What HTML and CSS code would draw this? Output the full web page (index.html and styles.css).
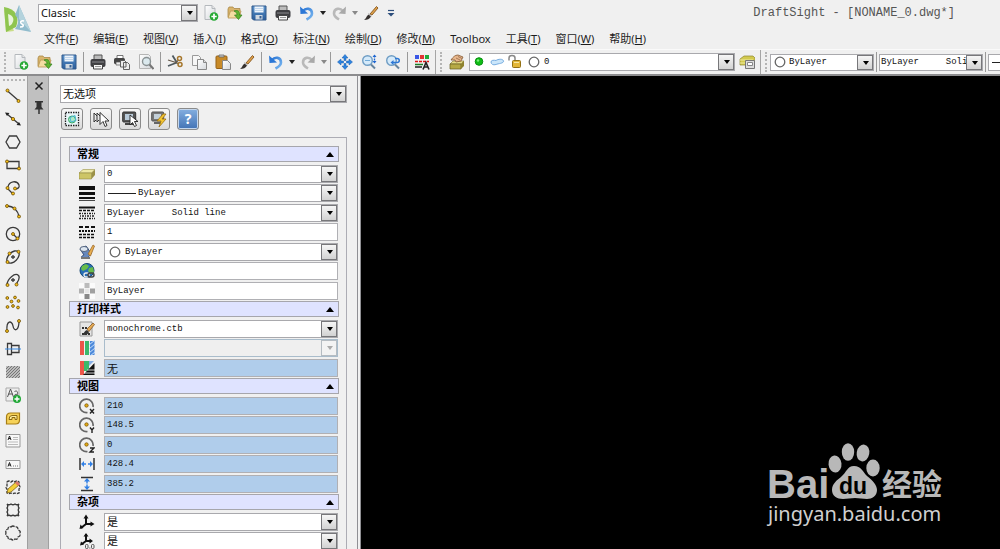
FILE: index.html
```
<!DOCTYPE html>
<html lang="zh-CN">
<head>
<meta charset="utf-8">
<title>DraftSight - [NONAME_0.dwg*]</title>
<link rel="stylesheet" href="styles.css">
</head>
<body>
<svg class="sprite" aria-hidden="true">
  <defs>
    <linearGradient id="gPage" x1="0" y1="0" x2="1" y2="1"><stop offset="0" stop-color="#fff"/><stop offset="1" stop-color="#d5d8dc"/></linearGradient>
    <linearGradient id="gBlue" x1="0" y1="0" x2="0" y2="1"><stop offset="0" stop-color="#5a93cc"/><stop offset="1" stop-color="#2a5c9a"/></linearGradient>
    <linearGradient id="gUndo" x1="0" y1="0" x2="1" y2="1"><stop offset="0" stop-color="#2b77d6"/><stop offset="1" stop-color="#7cb8f0"/></linearGradient>
  </defs>
  <symbol id="new" viewBox="0 0 16 16"><path d="M2 .5h7l3 3v11H2z" fill="url(#gPage)" stroke="#b4b8bc"/><path d="M9 .5v3h3" fill="#e6e6e6" stroke="#b4b8bc"/><circle cx="11" cy="11.500" r="4.300" fill="#24a832"/><path d="M11 8.800v5.400M8.300 11.500h5.400" stroke="#fff" stroke-width="1.700"/></symbol>
  <symbol id="open" viewBox="0 0 16 16"><path d="M1 12V4l1-2h4l1 1.500h6V12z" fill="#d9b56c" stroke="#a98848" stroke-width=".8"/><path d="M1 13l2.500-7H14l-2 7z" fill="#f4dda2" stroke="#b79552" stroke-width=".8"/><path d="M7 6c4-1.500 6 .5 5.500 4H15l-3.500 4.500L7.500 10H10C10 8 9 7 7 6z" fill="#5fb32f" stroke="#30801d" stroke-width=".7"/></symbol>
  <symbol id="save" viewBox="0 0 16 16"><path d="M1 1h14v14H2.500L1 13.500z" fill="url(#gBlue)" stroke="#31598a"/><path d="M3.500 1.500h9v6h-9z" fill="#eef4fb"/><path d="M3.500 3.500h9M3.500 5.500h9" stroke="#aac7e4" stroke-width=".7"/><path d="M4.500 10h7v4.500h-7z" fill="#d1d9e1"/><path d="M8.500 11h2v2.500h-2z" fill="#365f92"/></symbol>
  <symbol id="print" viewBox="0 0 16 16"><path d="M4 1h8v5H4z" fill="#bbb" stroke="#555"/><rect x=".5" y="5" width="15" height="8" rx="2" fill="#3f3f42"/><path d="M2 8h12" stroke="#8b8b8e"/><path d="M3.500 10.500h9v4.500h-9z" fill="#f6f6f6" stroke="#444"/><path d="M5 12.500h6" stroke="#999"/></symbol>
  <symbol id="batch" viewBox="0 0 16 16"><path d="M3 1.500h6v3H3z" fill="#fff" stroke="#555" stroke-width=".8"/><rect x="0" y="4" width="11" height="6" rx="1.500" fill="#444"/><path d="M2 8h6v3H2z" fill="#eee" stroke="#555" stroke-width=".7"/><path d="M6.500 6.500h4l1.500 1.500v5H6.500zM9.500 8.500h4l2 2v5h-6z" fill="#eee" stroke="#555" stroke-width=".9"/></symbol>
  <symbol id="preview" viewBox="0 0 16 16"><path d="M1.500 .5h9l2 2v12h-11z" fill="url(#gPage)" stroke="#b5b5b5"/><circle cx="8.500" cy="7.500" r="4" fill="#dbe9ee" stroke="#8a9294" stroke-width="1.400"/><path d="M11.500 10.500l4 4.500" stroke="#777" stroke-width="2"/></symbol>
  <symbol id="cut" viewBox="0 0 16 16"><path d="M10 8.500L1 12M9.500 8L5.500 1.500" stroke="#4f5a60" stroke-width="1.800"/><path d="M9 8.500l2-2M9 8.500l3 1.500M1 6l8 2.500" stroke="#65594a" stroke-width="1.300"/><circle cx="12.500" cy="4.500" r="2" fill="none" stroke="#a6772d" stroke-width="1.500"/><circle cx="13" cy="10.500" r="2" fill="none" stroke="#a6772d" stroke-width="1.500"/></symbol>
  <symbol id="copy" viewBox="0 0 16 16"><path d="M1.500 1.500h6l2 2v8h-8z" fill="#f6f6f6" stroke="#999"/><path d="M6.500 5.500h6l3 3v7h-9z" fill="url(#gPage)" stroke="#888"/><path d="M12.500 5.500v3h3" fill="#ddd" stroke="#888"/></symbol>
  <symbol id="paste" viewBox="0 0 16 16"><rect x="1" y="2" width="11" height="12.500" rx="1" fill="#c88a27" stroke="#966219"/><path d="M4 3V1h5v2z" fill="#ccc" stroke="#666" stroke-width=".8"/><path d="M7.500 6.500h5l3 3v6h-8z" fill="url(#gPage)" stroke="#888"/></symbol>
  <symbol id="brush" viewBox="0 0 16 16"><path d="M7 9L13.500 1.500 15 3 9 10z" fill="#dfa24b" stroke="#85531c" stroke-width=".9"/><path d="M1 15c2-1 2-3.500 4.500-5.500l2.500 2c-1 2.500-4 3.500-7 3.500z" fill="#34302e"/><path d="M5.500 8.500L8.500 11" stroke="#aaa"/></symbol>
  <symbol id="undo" viewBox="0 0 16 16"><path d="M4 6C7 2.500 13 3 13 8.500c0 3-2.500 4.500-5.500 6" fill="none" stroke="url(#gUndo)" stroke-width="2.600"/><path d="M1 1.500l.500 7.500L9 8.500z" fill="#2b77d6"/></symbol>
  <symbol id="redo" viewBox="0 0 16 16"><path d="M12 6C9 2.500 3 3 3 8.500c0 3 2.500 4.500 5 6" fill="none" stroke="#b9b9b9" stroke-width="2.600"/><path d="M15 1.500l-.500 7.500L7.500 8.500z" fill="#a9a9a9"/></symbol>
  <symbol id="pan" viewBox="0 0 16 16"><path d="M8 .5l3 3.500H9v2.500H7V4H5zM8 15.500L5 12h2V9.500h2V12h2zM.5 8L4 5v2h2.500v2H4v2zM15.500 8L12 11V9H9.500V7H12V5z" fill="#2b83e0" stroke="#1b5cae" stroke-width=".5"/></symbol>
  <symbol id="zoomin" viewBox="0 0 16 16"><circle cx="6.500" cy="6.500" r="4.800" fill="#d5eafa" stroke="#6f9dc4" stroke-width="1.400"/><path d="M4 6.500h5" stroke="#72abd9"/><path d="M10 10.500l4 4" stroke="#66849e" stroke-width="2"/><path d="M13.500 1.500v7" stroke="#1d66d2" stroke-width="1.300" stroke-dasharray="2 1"/><path d="M11.500 3l2-2.500 2 2.500zM11.500 7l2 2.500 2-2.500z" fill="#1d66d2"/></symbol>
  <symbol id="zoomback" viewBox="0 0 16 16"><circle cx="6.500" cy="6.500" r="4.800" fill="#d5eafa" stroke="#6f9dc4" stroke-width="1.400"/><path d="M10 10.500l4 4" stroke="#66849e" stroke-width="2"/><path d="M7 8.500h5c3 0 3-4 0-4h-2" fill="none" stroke="#2d78d5" stroke-width="1.500"/><path d="M8.500 6v5L5.500 8.500z" fill="#2d78d5"/></symbol>
  <symbol id="props" viewBox="0 0 16 16"><path d="M1 1h4v4H1z" fill="#3957e6"/><path d="M6 1h4v4H6z" fill="#e03434"/><path d="M11 1h4v4h-4z" fill="#1faa3b"/><path d="M1 7.500h14" stroke="#d11" stroke-width="1.500" stroke-dasharray="3 1"/><path d="M1 10.500h8" stroke="#1a7f26" stroke-width="1.500"/><path d="M1 13h7" stroke="#222" stroke-width="1.500"/><path d="M9 15.500l3-7 3 7M10.200 13h3.600" fill="none" stroke="#222" stroke-width="1.600"/></symbol>
  <symbol id="layers" viewBox="0 0 16 16"><path d="M1 10l3-3h11l-3 3z" fill="#e6dc88" stroke="#776d25" stroke-width=".6"/><path d="M1 10h11v5H1z" fill="#b6a945" stroke="#655b1d" stroke-width=".7"/><path d="M12 10l3-3v5l-3 3z" fill="#8f832e"/><path d="M2 6c2-3 4-5 7-5l5 2-2 4-5 1-1-2z" fill="#e7b68c" stroke="#845832" stroke-width=".8"/><path d="M7 4l4 2M9 2.500l4 2" stroke="#8d6040" stroke-width=".7"/></symbol>
  <symbol id="slab" viewBox="0 0 16 16"><path d="M0 7l4-3.500h12L12.500 7z" fill="#eee9a7" stroke="#9b9248" stroke-width=".6"/><path d="M0 7h12.500v6H0z" fill="#cdc566" stroke="#8e863f" stroke-width=".6"/><path d="M12.500 7L16 3.500V9l-3.500 4z" fill="#9b9147"/></symbol>
  <symbol id="layerstate" viewBox="0 0 16 16"><path d="M1 5l4-3h9l2 2v7H1z" fill="#d2c94e" stroke="#8e852f" stroke-width=".7"/><path d="M1 6h13M1 9h8" stroke="#f0eca0"/><path d="M6.500 6.500h9v8h-9z" fill="#dcdcdc" stroke="#777"/><path d="M8.500 8.500h5v3h-5z" fill="#fff" stroke="#888"/></symbol>
  <symbol id="dot" viewBox="0 0 16 16"><circle cx="7" cy="7.500" r="3.800" fill="#10bd16" stroke="#079010"/><circle cx="6" cy="6.500" r="1.200" fill="#7bed7b"/></symbol>
  <symbol id="freeze" viewBox="0 0 16 16"><path d="M1 8c0-2 3-2 5-1.500C8 5 13 4.500 13.500 7S8 9.500 6 10.500C3 11.500 1 10 1 8z" fill="#cbe6fa" stroke="#76ace0"/></symbol>
  <symbol id="unlock" viewBox="0 0 16 16"><path d="M1 6.500V4C1 .7 7 .7 7 4v3" fill="none" stroke="#888" stroke-width="1.500"/><rect x="4.500" y="6.500" width="8" height="7" rx="1" fill="#e3b637" stroke="#927014"/><path d="M6 8.500h5" stroke="#f7e7a5"/></symbol>
  <symbol id="ring" viewBox="0 0 16 16"><circle cx="8" cy="8" r="4.800" fill="#fff" stroke="#666" stroke-width="1.300"/></symbol>

  <symbol id="line" viewBox="0 0 16 16"><path d="M2 2.500l12 10.500" class="ink"/><circle cx="2.500" cy="2.500" r="1.500" class="node"/><circle cx="13.500" cy="13" r="1.500" class="node"/></symbol>
  <symbol id="xline" viewBox="0 0 16 16"><path d="M2 3l12 10" class="ink"/><path d="M0 1.500l4.500.5-2.500 3zM16 14.500l-4.500-.5 2.500-3z" fill="#222"/><circle cx="8" cy="8" r="1.600" class="node"/></symbol>
  <symbol id="hex" viewBox="0 0 16 16"><path d="M4.500 2h7l3.500 6-3.500 6h-7L1 8z" class="ink"/></symbol>
  <symbol id="rect" viewBox="0 0 16 16"><path d="M2 4.500h12v7H2z" class="ink"/><circle cx="2" cy="4.500" r="1.500" class="node"/><circle cx="14" cy="11.500" r="1.500" class="node"/></symbol>
  <symbol id="arc" viewBox="0 0 16 16"><path d="M8 14L2.500 8.500M3 7c1-6 9-7 11-2 1 3-2 4-4 4" class="ink"/><circle cx="8" cy="13.500" r="1.500" class="node"/><circle cx="2.500" cy="8" r="1.500" class="node"/><circle cx="10" cy="8.500" r="1.500" class="node"/></symbol>
  <symbol id="arc3" viewBox="0 0 16 16"><path d="M2 3c6 0 11 4 12 11" class="ink"/><circle cx="2" cy="3" r="1.500" class="node"/><circle cx="9.500" cy="5.500" r="1.500" class="node"/><circle cx="14" cy="13.500" r="1.500" class="node"/></symbol>
  <symbol id="circle" viewBox="0 0 16 16"><circle cx="8" cy="8" r="6.700" class="ink"/><path d="M8 8l5 5" class="ink"/><circle cx="8" cy="8" r="1.500" class="node"/><circle cx="12.500" cy="12.500" r="1.500" class="node"/></symbol>
  <symbol id="ellipse" viewBox="0 0 16 16"><ellipse cx="8" cy="8" rx="7.500" ry="4.500" transform="rotate(-45 8 8)" class="ink"/><path d="M8 6v4M6 8h4" class="ink"/><circle cx="2.500" cy="13" r="1.500" class="node"/><circle cx="13.500" cy="2.800" r="1.500" class="node"/><circle cx="4.500" cy="4.500" r="1.500" class="node"/></symbol>
  <symbol id="earc" viewBox="0 0 16 16"><path d="M2 13C2 7 10 0 13.500 3.500c2 2.500 0 5-2 8M8 6v4M6 8h4" class="ink"/><circle cx="2.500" cy="13" r="1.500" class="node"/><circle cx="11.500" cy="12.500" r="1.500" class="node"/></symbol>
  <symbol id="points" viewBox="0 0 16 16"><g class="node"><circle cx="2.300" cy="3" r="1.400"/><circle cx="10" cy="2.500" r="1.400"/><circle cx="6.500" cy="6.500" r="1.400"/><circle cx="13.500" cy="6" r="1.400"/><circle cx="2.500" cy="12" r="1.400"/><circle cx="8" cy="11" r="1.400"/><circle cx="13" cy="12.500" r="1.400"/></g></symbol>
  <symbol id="spline" viewBox="0 0 16 16"><path d="M2 13C1 2 7 2 8 8s6 5 6-5" class="ink"/><circle cx="2" cy="13" r="1.500" class="node"/><circle cx="14" cy="3" r="1.500" class="node"/></symbol>
  <symbol id="block" viewBox="0 0 16 16"><path d="M2.500 2.500h4v11h-4zM6.500 4.500H14v7H6.500z" class="ink"/><path d="M0 8h16" stroke="#3789e4"/></symbol>
  <symbol id="hatch" viewBox="0 0 16 16"><path d="M1 2h14v12H1z" fill="#bcbcbc"/><path d="M1 5l3-3M1 8l6-6M1 11l9-9M1 14L13 2M4 14L15 3M7 14l8-8M10 14l5-5M13 14l2-2" stroke="#777"/></symbol>
  <symbol id="textadd" viewBox="0 0 16 16"><path d="M1 1h13v13H1z" fill="#eee" stroke="#aaa"/><path d="M2.500 10l3-8 3 8M3.600 7h4M9.500 4.500c4-2 3 3 3 3-4-1-4 3 0 1" fill="none" stroke="#555"/><circle cx="12" cy="12" r="4" fill="#20a836"/><path d="M12 9.500v5M9.500 12h5" stroke="#fff" stroke-width="1.400"/></symbol>
  <symbol id="region" viewBox="0 0 16 16"><path d="M1.500 14V7q0-4 4-4h9v7q0 4-4 4z" fill="#f6d258" stroke="#a77e16" stroke-width="1.200"/><path d="M4 9.500q0-4 3-4h5v4h-2v-2H7v2z" fill="#fff0a2" stroke="#8a6914"/></symbol>
  <symbol id="note" viewBox="0 0 16 16"><path d="M1 1.500h14v12.500H1z" fill="#f8f8f8" stroke="#999"/><path d="M3 7l1.500-4L6 7M3.500 5.500h2" fill="none" stroke="#222"/><path d="M8 4.500h5M8 6.500h5M3 9h10M3 11.500h10" stroke="#bbb"/></symbol>
  <symbol id="snote" viewBox="0 0 16 16"><path d="M1 4.500h14v8H1z" fill="#f8f8f8" stroke="#999"/><path d="M3 10.500l1.500-4L6 10.500M3.500 9h2" fill="none" stroke="#222"/><path d="M8 10h5" stroke="#777" stroke-dasharray="1 1"/></symbol>
  <symbol id="revise" viewBox="0 0 16 16"><path d="M2 3q2-2 4 0 2-2 4 0 2-2 4 0v3q2 2 0 4v4q-2 1-4 0-2 1-4 0-2 1-4 0V10q-2-2 0-3z" class="ink" stroke-dasharray="3 1"/><path d="M2 14l1-4 8-7 3 3-8 7z" fill="#f3cf38" stroke="#80651a" stroke-width=".8"/><path d="M10 4l3 3 2-2-3-3z" fill="#d9786b"/></symbol>
  <symbol id="cloud" viewBox="0 0 16 16"><path d="M2 2q2 1.500 4 0 2 1.500 4 0 2 1.500 4 0-1.500 2 0 4-1.500 2 0 4-1.500 2 0 4-2-1.500-4 0-2-1.500-4 0-2-1.500-4 0 1.500-2 0-4 1.500-2 0-4 1.500-2 0-4z" class="ink"/></symbol>
  <symbol id="ecloud" viewBox="0 0 16 16"><path d="M6 2q2-2 4 0 3-1 3 3 3 1 2 3 1 3-2 4 0 3-3 2-2 2-4 0-3 1-3-2-3-2-2-4-1-3 2-4 0-3 3-2z" class="ink" stroke-dasharray="4 1"/></symbol>

  <symbol id="pin" viewBox="0 0 16 16"><path d="M4 2h8v1.500h-1.500V8l2 2.500h-9l2-2.500V3.500H4z" fill="#333"/><path d="M8 10v5" stroke="#333" stroke-width="1.500"/></symbol>
  <symbol id="selall" viewBox="0 0 16 16"><path d="M1.500 1.500h13v13h-13z" fill="#e9f5f8" stroke="#222" stroke-width="1.300" stroke-dasharray="1.500 1"/><circle cx="8" cy="8.500" r="3.500" fill="#afe9c5" stroke="#35a761"/><path d="M6 6.500l5-2 1 5-5 1.500z" fill="none" stroke="#4ab6d5"/></symbol>
  <symbol id="selmulti" viewBox="0 0 16 16"><path d="M1 2v9l2-2M4 2v9l2-2M1 2l3 3M4 2l3 3" fill="none" stroke="#333"/><path d="M7 1.500v12l3-3 2 5 2-1-2-4.500h4z" fill="#fff" stroke="#333"/></symbol>
  <symbol id="selscreen" viewBox="0 0 16 16"><rect x=".7" y="1" width="13" height="10" rx="1" fill="#555" stroke="#333"/><path d="M3 3h8v6H3z" fill="#b9cbda"/><path d="M3 13h8" stroke="#444" stroke-width="2"/><path d="M8 4v10l2.500-2.500 2 4 2-1-2-4H16z" fill="#fff" stroke="#222" stroke-width=".9"/></symbol>
  <symbol id="quick" viewBox="0 0 16 16"><rect x=".7" y="1" width="12" height="9" rx="1" fill="#777" stroke="#555"/><path d="M3 3h7v5H3z" fill="#c3d0da"/><path d="M3 12h7" stroke="#666" stroke-width="2"/><path d="M12 3L6 10h4l-2 6 7-8h-4l4-5z" fill="#f4c632" stroke="#9b7010" stroke-width=".8"/></symbol>

  <symbol id="weights" viewBox="0 0 16 16"><path d="M0 1h16v4H0zM0 7h16v3H0zM0 12h16v2H0zM0 15.300h16v.7H0z" fill="#111"/></symbol>
  <symbol id="ltype" viewBox="0 0 16 16"><path d="M0 2.500h16" stroke="#111" stroke-width="2"/><path d="M0 5.500h16" stroke="#111" stroke-width="1.500" stroke-dasharray="3 1"/><path d="M0 8.500h16M0 13.500h16" stroke="#222" stroke-width="1.500" stroke-dasharray="2 1 1 1"/><path d="M1 11h15" stroke="#222" stroke-width="1.500" stroke-dasharray="1 1 2 1"/></symbol>
  <symbol id="lscale" viewBox="0 0 16 16"><path d="M0 3h16" stroke="#111" stroke-width="2" stroke-dasharray="4 2"/><path d="M0 7h16" stroke="#111" stroke-width="2" stroke-dasharray="2 1"/><path d="M0 10.500h16M0 13.500h16" stroke="#111" stroke-width="1.700" stroke-dasharray="3 1"/></symbol>
  <symbol id="color" viewBox="0 0 16 16"><path d="M1 5l6-3 5 7c-1 4-5 6-8 5s-1-2 1-3z" fill="#6688bd" stroke="#344e7c"/><ellipse cx="5" cy="5" rx="4" ry="2.500" fill="#dce5ef" stroke="#566680"/><path d="M2 14h9" stroke="#777" stroke-width="2"/><path d="M9 10l5-9 1.500 1-4 10z" fill="#e7ae51" stroke="#935e20" stroke-width=".7"/></symbol>
  <symbol id="globe" viewBox="0 0 16 16"><circle cx="8" cy="7.500" r="7" fill="#276eb6" stroke="#154875"/><path d="M3 3l4-2 3 2-2 3-4 2-2-2zM10 5l4-1 1 5-3 2-3-3z" fill="#67bd49"/><rect x="5" y="10" width="5" height="4" rx="2" fill="none" stroke="#eee" stroke-width="1.300"/><rect x="9" y="10" width="6" height="4" rx="2" fill="none" stroke="#444" stroke-width="1.400"/></symbol>
  <symbol id="checker" viewBox="0 0 16 16"><path d="M0 0h16v16H0z" fill="#fbfbfb"/><path d="M5.500 0h5v5h-5z" fill="#bbb"/><path d="M0 5.500h5v5H0z" fill="#b0b0b0"/><path d="M11 5.500h5v5h-5z" fill="#a0a0a0"/><path d="M5.500 11h5v5h-5z" fill="#888"/><path d="M5.500 5.500h5v5h-5z" fill="#e6e6e6"/></symbol>
  <symbol id="pstyle" viewBox="0 0 16 16"><path d="M1 1h12v14H1z" fill="#e5e5e5" stroke="#999"/><path d="M3 7h5M3 13h8" stroke="#333" stroke-width="2" stroke-dasharray="2 1"/><path d="M8 8l6-6 1.500 1.500-5.500 7z" fill="#e4aa54" stroke="#7d4d18" stroke-width=".7"/><path d="M3 14c2-1 2-4 5-5l2 2c-1 3-4 3-7 3z" fill="#333"/></symbol>
  <symbol id="pcolors" viewBox="0 0 16 16"><path d="M1 1h4v14H1z" fill="#ed5549"/><path d="M6 1h4v14H6z" fill="#3cb96b"/><path d="M11 1h4.500v14H11z" fill="#4b88da"/><path d="M10 5l6-5M10 9l6-5M10 13l6-5M11 16l5-4" stroke="#c8e0fa"/></symbol>
  <symbol id="ptable" viewBox="0 0 16 16"><path d="M1 1h4v14H1z" fill="#ed5549"/><path d="M5 1h5v10H5z" fill="#3cb96b"/><path d="M10 1h5L10 6z" fill="#86afe7"/><path d="M15.500 3L4 15h11.500z" fill="#111"/><path d="M8 10h8M5 13h11" stroke="#fff" stroke-width=".8"/></symbol>
  <symbol id="center" viewBox="0 0 16 16"><path d="M8.500 14.500A6.700 6.700 0 1 1 14 9" fill="none" stroke="#666" stroke-width="1.700"/><circle cx="7.500" cy="7.500" r="1.700" fill="#e3ab16" stroke="#7f5b0a" stroke-width=".8"/></symbol>
  <symbol id="cx" viewBox="0 0 16 16"><use href="#center"/><path d="M11 11l4 4.500M15 11l-4 4.500" stroke="#222" stroke-width="1.400"/></symbol>
  <symbol id="cy" viewBox="0 0 16 16"><use href="#center"/><path d="M11 10.500l2 2.500 2-2.500M13 13v3" fill="none" stroke="#222" stroke-width="1.400"/></symbol>
  <symbol id="cz" viewBox="0 0 16 16"><use href="#center"/><path d="M11 11h4l-4 4h4" fill="none" stroke="#222" stroke-width="1.400"/></symbol>
  <symbol id="width" viewBox="0 0 16 16"><path d="M1 2v12M15 2v12" stroke="#333" stroke-width="1.500"/><path d="M2 8l3-3v2.300h2v1.400H5V11zM14 8l-3-3v2.300H9v1.400h2V11z" fill="#2f7fe5"/></symbol>
  <symbol id="height" viewBox="0 0 16 16"><path d="M2 1.500h12M2 14.500h12" stroke="#333" stroke-width="1.500"/><path d="M8 2l3 3.500H8.700v2H7.300v-2H5zM8 14l-3-3.500h2.300v-2h1.400v2H11z" fill="#2f7fe5"/></symbol>
  <symbol id="ucs" viewBox="0 0 16 16"><path d="M7 2v8h7M7 10l-5 4" fill="none" stroke="#111" stroke-width="2"/><path d="M4.500 4.500L7 .5l2.500 4zM11.500 7.500l4 2.500-4 2.500zM.5 15l1-4.500 3 3.500z" fill="#111"/></symbol>
  <symbol id="ucs0" viewBox="0 0 16 16"><path d="M7 1v7h5M7 8l-4 3" fill="none" stroke="#111" stroke-width="2"/><path d="M4.500 3.500L7 0l2.500 3.500zM10.500 5.500L14 8l-3.500 2.500zM1 12.500l1-4 3 3z" fill="#111"/><rect x="6.500" y="11.500" width="2.500" height="4" rx="1" fill="none" stroke="#555"/><rect x="12.500" y="11.500" width="2.500" height="4" rx="1" fill="none" stroke="#555"/><path d="M10.300 15h1" stroke="#555"/></symbol>
  <symbol id="more" viewBox="0 0 16 16"><path d="M5 5.500h6" stroke="#2d4e7c" stroke-width="1.200"/><path d="M4.500 8h7L8 11.500z" fill="#2d4e7c"/></symbol>
</svg>

<header class="header">
  <svg class="logo" viewBox="0 0 28 30" role="img" aria-label="DraftSight"><path d="M0 3L10 26 2 27z" fill="#c9dd86"/><path d="M0 2c12 2 16 10 12 20l-10 5z" fill="#8fc54f"/><path d="M4 9c6 2 7 6 3 11l-2 1z" fill="#e9f4dc"/><path d="M15 0l12 27-16-3c6-8 2-12 0-14z" fill="#91bccd"/><path d="M15 0l12 27L15 14z" fill="#b4d3dd"/><path d="M20 16c-4-1-4 2-2 3s2 3-2 3" fill="none" stroke="#fff" stroke-width="1.600"/></svg>
  <div class="titlebar">
    <span class="combo workspace"><select aria-label="工作空间"><option>Classic</option></select></span>
    <div class="quick">
      <button class="tool" aria-label="新建"><svg><use href="#new"/></svg></button>
      <button class="tool" aria-label="打开"><svg><use href="#open"/></svg></button>
      <button class="tool" aria-label="保存"><svg><use href="#save"/></svg></button>
      <button class="tool" aria-label="打印"><svg><use href="#print"/></svg></button>
      <button class="tool" aria-label="撤消"><svg><use href="#undo"/></svg></button>
      <button class="drop" aria-label="撤消列表"></button>
      <button class="tool" aria-label="重做"><svg><use href="#redo"/></svg></button>
      <button class="drop dim" aria-label="重做列表"></button>
      <button class="tool" aria-label="特性涂刷器"><svg><use href="#brush"/></svg></button>
      <button aria-label="更多"><svg><use href="#more"/></svg></button>
    </div>
    <h1 class="title">DraftSight - [NONAME_0.dwg*]</h1>
  </div>
  <nav class="menu">
    <a href="#">文件(<u>F</u>)</a><a href="#">编辑(<u>E</u>)</a><a href="#">视图(<u>V</u>)</a><a href="#">插入(<u>I</u>)</a><a href="#">格式(<u>O</u>)</a><a href="#">标注(<u>N</u>)</a><a href="#">绘制(<u>D</u>)</a><a href="#">修改(<u>M</u>)</a><a href="#">Toolbox</a><a href="#">工具(<u>T</u>)</a><a href="#">窗口(<u>W</u>)</a><a href="#">帮助(<u>H</u>)</a>
  </nav>
</header>

<div class="toolbars">
  <div class="bar">
    <button class="tool" aria-label="新建"><svg><use href="#new"/></svg></button>
    <button class="tool" aria-label="打开"><svg><use href="#open"/></svg></button>
    <button class="tool" aria-label="保存"><svg><use href="#save"/></svg></button>
    <i class="sep"></i>
    <button class="tool" aria-label="打印"><svg><use href="#print"/></svg></button>
    <button class="tool" aria-label="批量打印"><svg><use href="#batch"/></svg></button>
    <button class="tool" aria-label="打印预览"><svg><use href="#preview"/></svg></button>
    <i class="sep"></i>
    <button class="tool" aria-label="剪切"><svg><use href="#cut"/></svg></button>
    <button class="tool" aria-label="复制"><svg><use href="#copy"/></svg></button>
    <button class="tool" aria-label="粘贴"><svg><use href="#paste"/></svg></button>
    <button class="tool" aria-label="特性涂刷器"><svg><use href="#brush"/></svg></button>
    <i class="sep"></i>
    <button class="tool" aria-label="撤消"><svg><use href="#undo"/></svg></button>
    <button class="drop" aria-label="撤消列表"></button>
    <button class="tool" aria-label="重做"><svg><use href="#redo"/></svg></button>
    <button class="drop dim" aria-label="重做列表"></button>
    <i class="sep"></i>
    <button class="tool" aria-label="平移"><svg><use href="#pan"/></svg></button>
    <button class="tool" aria-label="动态缩放"><svg><use href="#zoomin"/></svg></button>
    <button class="tool" aria-label="上一个缩放"><svg><use href="#zoomback"/></svg></button>
    <i class="sep"></i>
    <button class="tool" aria-label="属性"><svg><use href="#props"/></svg></button>
  </div>
  <div class="bar">
    <button class="tool" aria-label="图层管理器"><svg><use href="#layers"/></svg></button>
    <span class="combo layer"><svg><use href="#dot"/></svg><svg><use href="#freeze"/></svg><svg><use href="#unlock"/></svg><svg><use href="#ring"/></svg><select aria-label="图层"><option>0</option></select></span>
    <button class="tool" aria-label="图层状态"><svg><use href="#layerstate"/></svg></button>
  </div>
  <div class="bar last">
    <span class="combo prop-combo"><svg><use href="#ring"/></svg><select aria-label="线条颜色"><option>ByLayer</option></select></span>
    <i class="sep"></i>
    <span class="combo prop-combo"><select aria-label="线条样式"><option>ByLayer&nbsp;&nbsp;&nbsp;&nbsp;&nbsp;Solid line</option></select></span>
    <i class="sep"></i>
    <span class="combo prop-combo"><i class="rule"></i><select aria-label="线宽"><option>ByLayer</option></select></span>
  </div>
</div>

<main class="workspace-area">
  <div class="draw-tools">
    <button aria-label="直线"><svg><use href="#line"/></svg></button>
    <button aria-label="无限直线"><svg><use href="#xline"/></svg></button>
    <button aria-label="多边形"><svg><use href="#hex"/></svg></button>
    <button aria-label="矩形"><svg><use href="#rect"/></svg></button>
    <button aria-label="多段线"><svg><use href="#arc"/></svg></button>
    <button aria-label="圆弧"><svg><use href="#arc3"/></svg></button>
    <button aria-label="圆"><svg><use href="#circle"/></svg></button>
    <button aria-label="椭圆"><svg><use href="#ellipse"/></svg></button>
    <button aria-label="椭圆弧"><svg><use href="#earc"/></svg></button>
    <button aria-label="点"><svg><use href="#points"/></svg></button>
    <button aria-label="样条曲线"><svg><use href="#spline"/></svg></button>
    <button aria-label="块"><svg><use href="#block"/></svg></button>
    <button aria-label="剖面线"><svg><use href="#hatch"/></svg></button>
    <button aria-label="添加文字"><svg><use href="#textadd"/></svg></button>
    <button aria-label="面域"><svg><use href="#region"/></svg></button>
    <button aria-label="注释"><svg><use href="#note"/></svg></button>
    <button aria-label="简单注释"><svg><use href="#snote"/></svg></button>
    <button aria-label="徒手云线"><svg><use href="#revise"/></svg></button>
    <button aria-label="矩形云线"><svg><use href="#cloud"/></svg></button>
    <button aria-label="椭圆云线"><svg><use href="#ecloud"/></svg></button>
  </div>
  <div class="dock">
    <button aria-label="关闭"><svg viewBox="0 0 16 16"><path d="M4.500 4.500l7 7M11.500 4.500l-7 7" stroke="#222" stroke-width="1.500"/></svg></button>
    <button aria-label="固定"><svg><use href="#pin"/></svg></button>
  </div>
  <section class="panel" aria-label="属性">
    <span class="combo selection"><select aria-label="选择"><option>无选项</option></select></span>
    <div class="actions">
      <button aria-label="全选"><svg><use href="#selall"/></svg></button>
      <button aria-label="选择匹配"><svg><use href="#selmulti"/></svg></button>
      <button aria-label="图形区域选择"><svg><use href="#selscreen"/></svg></button>
      <button aria-label="智能选择"><svg><use href="#quick"/></svg></button>
      <button class="help" aria-label="帮助">?</button>
    </div>
    <div class="groups">
      <button class="group-head">常规</button>
      <div class="rows">
        <label for="p1"><svg><use href="#slab"/></svg></label><span class="combo"><select id="p1" aria-label="图层"><option>0</option></select></span>
        <label for="p2"><svg><use href="#weights"/></svg></label><span class="combo"><i class="rule"></i><select id="p2" aria-label="线宽"><option>ByLayer</option></select></span>
        <label for="p3"><svg><use href="#ltype"/></svg></label><span class="combo"><select id="p3" aria-label="线条样式"><option>ByLayer&nbsp;&nbsp;&nbsp;&nbsp;&nbsp;Solid line</option></select></span>
        <label for="p4"><svg><use href="#lscale"/></svg></label><input id="p4" aria-label="线条比例" value="1">
        <label for="p5"><svg><use href="#color"/></svg></label><span class="combo"><svg><use href="#ring"/></svg><select id="p5" aria-label="线条颜色"><option>ByLayer</option></select></span>
        <label for="p6"><svg><use href="#globe"/></svg></label><input id="p6" aria-label="超链接" value="">
        <label for="p7"><svg><use href="#checker"/></svg></label><input id="p7" aria-label="透明度" value="ByLayer">
      </div>
      <button class="group-head">打印样式</button>
      <div class="rows">
        <label for="p8"><svg><use href="#pstyle"/></svg></label><span class="combo"><select id="p8" aria-label="打印样式表"><option>monochrome.ctb</option></select></span>
        <label for="p9"><svg><use href="#pcolors"/></svg></label><span class="combo off"><select id="p9" aria-label="打印样式" disabled><option></option></select></span>
        <label for="p10"><svg><use href="#ptable"/></svg></label><input id="p10" class="cjk" aria-label="打印表类型" value="无" readonly>
      </div>
      <button class="group-head">视图</button>
      <div class="rows">
        <label for="p11"><svg><use href="#cx"/></svg></label><input id="p11" aria-label="中心 X" value="210" readonly>
        <label for="p12"><svg><use href="#cy"/></svg></label><input id="p12" aria-label="中心 Y" value="148.5" readonly>
        <label for="p13"><svg><use href="#cz"/></svg></label><input id="p13" aria-label="中心 Z" value="0" readonly>
        <label for="p14"><svg><use href="#width"/></svg></label><input id="p14" aria-label="宽度" value="428.4" readonly>
        <label for="p15"><svg><use href="#height"/></svg></label><input id="p15" aria-label="高度" value="385.2" readonly>
      </div>
      <button class="group-head">杂项</button>
      <div class="rows">
        <label for="p16"><svg><use href="#ucs"/></svg></label><span class="combo"><select id="p16" class="cjk" aria-label="坐标系图标"><option>是</option></select></span>
        <label for="p17"><svg><use href="#ucs0"/></svg></label><span class="combo"><select id="p17" class="cjk" aria-label="原点处图标"><option>是</option></select></span>
      </div>
    </div>
  </section>
  <section class="canvas" aria-label="图形区域">
    <svg class="watermark" viewBox="0 0 184 90">
      <g fill="#b8b8b8">
        <ellipse cx="70" cy="24" rx="6.500" ry="8.500" transform="rotate(-6 70 24)"/>
        <ellipse cx="83" cy="12" rx="6.200" ry="8.700"/>
        <ellipse cx="98" cy="13" rx="6.300" ry="8.500" transform="rotate(10 98 13)"/>
        <ellipse cx="108" cy="28" rx="6.700" ry="8.500"/>
        <path d="M89 26c7 0 9 6 13 10 6 5 10 9 10 14 0 6-5 9-10 9-4 0-8-1-12-1s-8 1-12 1c-6 0-11-3-11-9s5-10 9-13c6-5 6-11 13-11z"/>
        <text class="wm-bai" x="2" y="58">Bai</text>
        <text class="wm-cn" x="117" y="55">经验</text>
      </g>
      <text class="wm-du" x="74" y="54">du</text>
      <text class="wm-url" x="3" y="81">jingyan.baidu.com</text>
    </svg>
  </section>
</main>
</body>
</html>
```
FILE: styles.css
```
* { box-sizing: border-box; }
html, body { height: 100%; }
body {
  margin: 0;
  display: flex;
  flex-direction: column;
  overflow: hidden;
  background: #f0f0f0;
  color: #1c1c1c;
  font: 11px/16px "Noto Sans", "Noto Sans CJK SC", sans-serif;
}
.sprite { position: absolute; width: 0; height: 0; }
.ink { fill: none; stroke: #3a3a3a; stroke-width: 1.3px; }
.node { fill: #f5bf18; stroke: #6b4c05; stroke-width: 0.8px; }
svg { display: block; flex: none; width: 16px; height: 16px; }
button { flex: none; margin: 0; padding: 0; border: 0; background: none; color: inherit; font: inherit; }

/* header */
.header { flex: none; display: grid; grid-template: 27px 22px / 38px 1fr; }
.logo { grid-row: 1 / 3; width: 28px; height: 30px; margin: 5px 0 0 4px; }
.titlebar { display: flex; align-items: center; padding-bottom: 2px; }
.quick { display: flex; align-items: center; margin-left: 1px; }
.title {
  margin: 0 45px 0 auto;
  color: #555;
  font: 12px/16px "Liberation Mono", monospace;
  white-space: nowrap;
}
.menu { display: flex; align-items: center; gap: 15px; padding: 1px 0 0 6px; white-space: nowrap; }
.menu a { color: inherit; text-decoration: none; }

/* tool buttons */
.tool { display: grid; place-items: center; width: 24px; height: 22px; }
.drop { display: grid; place-items: center; width: 8px; height: 16px; }
.drop::after { content: ""; border: 3px solid transparent; border-top: 4px solid #222; border-bottom: 0; }
.drop.dim::after { border-top-color: #888; }

/* toolbars */
.toolbars {
  flex: none;
  display: flex;
  overflow: hidden;
  border-top: 1px solid #fafafa;
  border-bottom: 2px solid #8c8c8e;
}
.bar { flex: none; display: flex; align-items: center; height: 24px; padding: 0 1px 0 9px; border-right: 1px solid #a5a5a5; position: relative; }
.bar::before {
  content: "";
  position: absolute;
  left: 4px;
  top: 2px;
  bottom: 2px;
  border-left: 2px dotted #b5b5b5;
}
.bar.last { border-right: 0; padding-right: 0; }
.sep { flex: none; width: 1px; height: 20px; margin: 0 2px; background: #999; }

/* combos and fields */
.combo {
  display: flex;
  align-items: center;
  position: relative;
  height: 18px;
  border: 1px solid #a9a9ad;
  background: #fff;
}
.combo svg { margin-left: 2px; }
.combo select {
  flex: 1;
  min-width: 0;
  height: 16px;
  padding: 0 14px 0 2px;
  border: 0;
  appearance: none;
  background: none;
  color: #111;
  font: 9px/16px "Liberation Mono", monospace;
}
.combo::before {
  content: "";
  position: absolute;
  right: 0;
  top: 0;
  bottom: 0;
  width: 14px;
  border: 1px solid #77777a;
  background: linear-gradient(#f6f6f6, #d2d2d2);
  pointer-events: none;
}
.combo::after {
  content: "";
  position: absolute;
  right: 4px;
  top: 6px;
  border: 3px solid transparent;
  border-top: 4px solid #000;
  border-bottom: 0;
  pointer-events: none;
}
.combo.off { background: #efefef; border-color: #a9bccb; }
.combo.off::before { border-color: #b5bcc2; background: #f3f3f3; }
.combo.off::after { border-top-color: #aaa; }
.rule { flex: none; width: 28px; height: 1px; margin-left: 3px; background: #222; }
.workspace { width: 160px; }
.workspace select, .combo.selection select, .combo .cjk { font: 11px/16px "Noto Sans", "Noto Sans CJK SC", sans-serif; }
.layer { width: 266px; }
.prop-combo { flex: none; width: 104px; height: 17px; }
.prop-combo svg { margin-left: 1px; }
.prop-combo select { padding-left: 1px; }

/* main area */
.workspace-area { flex: 1; min-height: 0; display: flex; overflow: hidden; }
.draw-tools { flex: none; width: 27px; padding-top: 3px; }
.draw-tools::before { content: ""; display: block; margin: 0 2px 3px 3px; border-top: 2px dotted #b5b5b5; }
.draw-tools button { display: grid; place-items: center; width: 26px; height: 23px; }
.dock { flex: none; width: 22px; padding: 2px 0 0 3px; border: solid #a0a0a0; border-width: 0 1px; background: #c0c0c0; }
.dock button { display: block; margin-bottom: 5px; }
.panel {
  flex: none;
  display: flex;
  flex-direction: column;
  width: 312px;
  padding: 9px 10px 0 11px;
  border-right: 4px double #909094;
}
.actions { display: flex; gap: 7px; padding: 5px 1px 7px; }
.actions button {
  display: grid;
  place-items: center;
  width: 22px;
  height: 22px;
  border: 1px solid #8b8b8b;
  border-radius: 3px;
  background: linear-gradient(#f8f8f8, #dadada);
}
.actions .help { background: linear-gradient(#85afe0, #4273b5); box-shadow: inset 0 0 0 1px #c4d7ee; color: #fff; font-weight: 700; font-size: 14px; }
.groups { flex: 1; min-height: 0; padding: 8px 7px 0 8px; border: solid #acacb4; border-width: 1px 1px 0; overflow: hidden; }
.group-head {
  display: flex;
  align-items: center;
  justify-content: space-between;
  width: 100%;
  height: 16px;
  padding: 0 4px 0 7px;
  border: 1px solid #a6a6ac;
  background: #dfe3ff;
  color: #000;
  font-weight: 700;
  line-height: 14px;
}
.group-head::after { content: ""; border: 4px solid transparent; border-bottom: 5px solid #000; border-top: 0; }
.rows {
  display: grid;
  grid-template-columns: 35px 1fr;
  grid-auto-rows: 19px 20px;
  padding: 3px 1px 0 0;
}
.rows label { padding: 1px 0 0 10px; }
.rows input {
  width: 100%;
  min-width: 0;
  height: 18px;
  padding: 0 2px;
  border: 1px solid #b0b0b4;
  border-radius: 0;
  background: #fff;
  color: #111;
  font: 9px/16px "Liberation Mono", monospace;
}
.rows input:read-only { background: #b0cdeb; }
.rows input.cjk { font: 11px/16px "Noto Sans", "Noto Sans CJK SC", sans-serif; }

/* drawing area */
.canvas { flex: 1; min-width: 0; position: relative; background: #000; }
.watermark { position: absolute; right: 51px; bottom: 19px; width: 184px; height: 90px; }
.wm-bai { font: bold 40px "Liberation Sans", sans-serif; }
.wm-cn { font: bold 30px "Noto Sans CJK SC", sans-serif; }
.wm-du { font: bold 23px "Liberation Sans", sans-serif; fill: #000; }
.wm-url { font: 20px "Noto Sans", sans-serif; fill: #d0d0d0; }
```
